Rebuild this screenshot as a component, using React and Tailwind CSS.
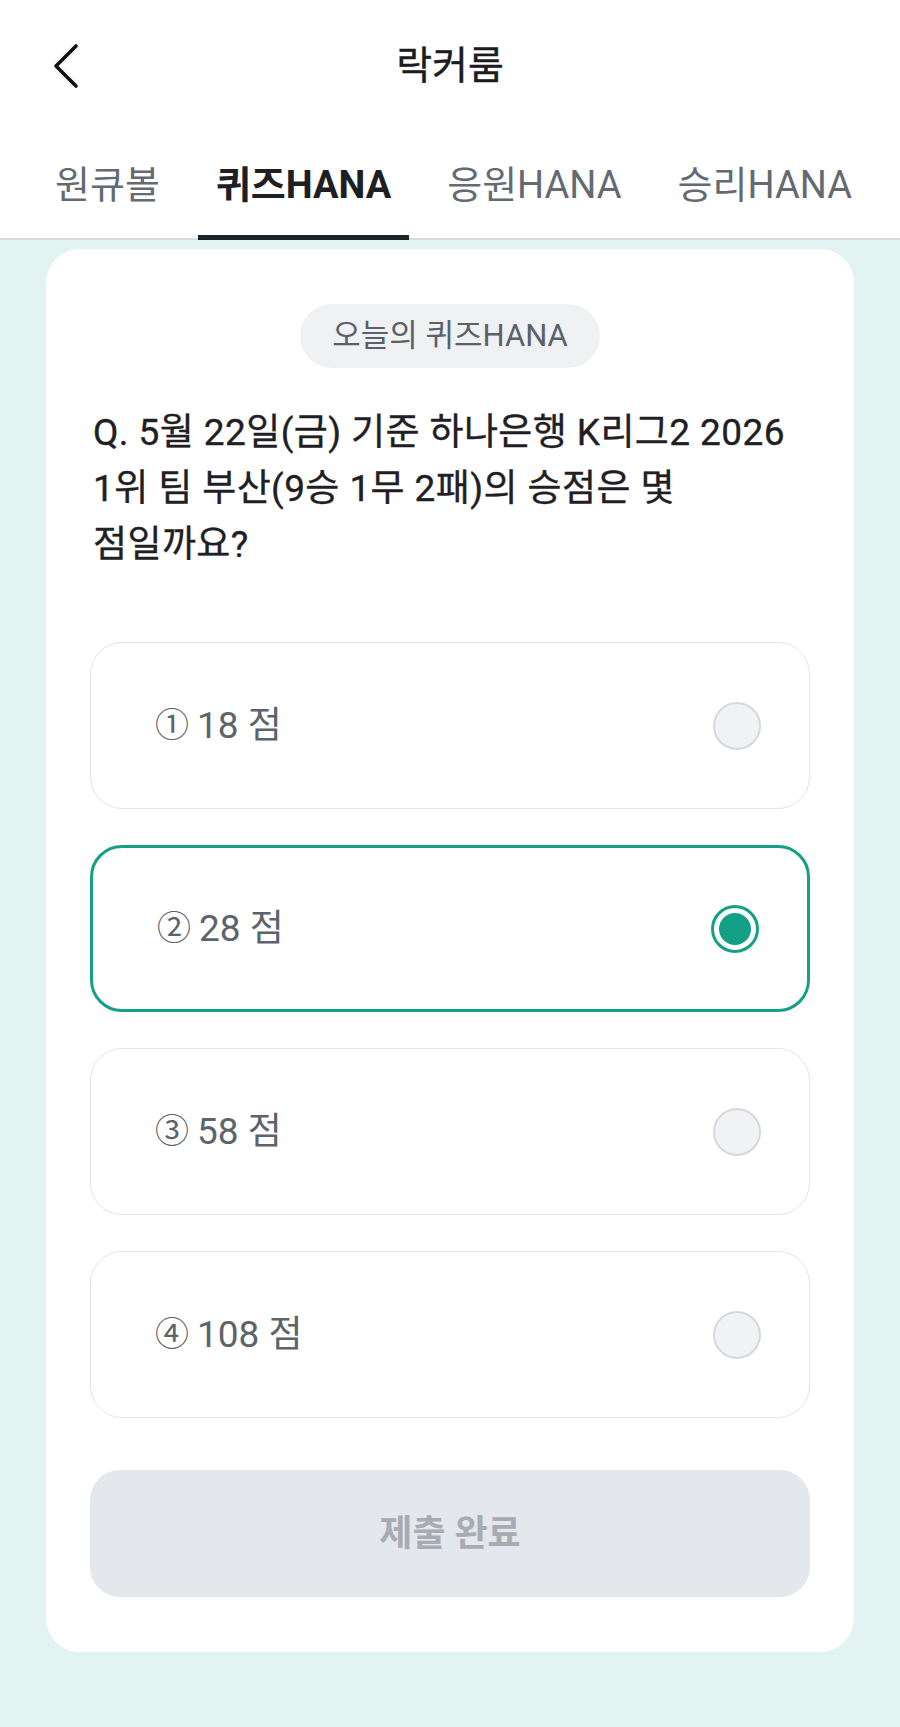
import React, { useState } from 'react';

const FONT = 'Roboto, "Noto Sans CJK KR", "Noto Sans", sans-serif';

const tabs = ['원큐볼', '퀴즈HANA', '응원HANA', '승리HANA'];

const options = [
  { mark: '①', label: '18 점' },
  { mark: '②', label: '28 점' },
  { mark: '③', label: '58 점' },
  { mark: '④', label: '108 점' },
];

const Radio = ({ checked }) =>
  checked ? (
    <span className="flex h-[48px] w-[48px] items-center justify-center rounded-full border-[3px] border-[#13a087] bg-white">
      <span className="h-[32px] w-[32px] rounded-full bg-[#13a087]" />
    </span>
  ) : (
    <span className="h-[48px] w-[48px] rounded-full border-2 border-[#d6d8dc] bg-[#f1f2f4]" />
  );

export default function App() {
  const [activeTab] = useState(1);
  const [selected, setSelected] = useState(1);

  return (
    <div className="min-h-screen bg-[#e3f3f2]" style={{ fontFamily: FONT }}>
      {/* header */}
      <header className="bg-white">
        <div className="grid h-[132px] grid-cols-[1fr_auto_1fr] items-center">
          <div className="pl-[52px]">
            <button className="flex items-center">
              <svg width="28" height="46" viewBox="0 0 28 46" fill="none">
                <path d="M24 3 L4 23 L24 43" stroke="#111" strokeWidth="3.6" strokeLinecap="round" strokeLinejoin="round" />
              </svg>
            </button>
          </div>
          <h1 className="text-[39px] font-normal text-[#1c1c1e] [-webkit-text-stroke:0.4px_#1c1c1e]">락커룸</h1>
          <div />
        </div>
        <nav className="flex h-[108px] gap-[20px] border-b-2 border-[#d9dcdf] pl-[37px]">
          {tabs.map((t, i) => (
            <div
              key={t}
              className={`relative flex items-center px-[18px] text-[38px] ${
                i === activeTab ? 'font-bold text-[#1d1f23]' : 'text-[#646a71]'
              }`}
            >
              {t}
              {i === activeTab && (
                <span className="absolute bottom-[-2px] left-0 right-0 h-[5px] bg-[#1e2229]" />
              )}
            </div>
          ))}
        </nav>
      </header>

      {/* quiz card */}
      <div className="mx-[46px] mt-[9px] rounded-[34px] bg-white px-[44px] pb-[55px] pt-[55px]">
        <div className="flex justify-center">
          <span className="flex h-[64px] w-[300px] items-center justify-center rounded-full bg-[#f0f1f3] text-[31px] text-[#5b6168]">
            오늘의 퀴즈HANA
          </span>
        </div>

        <p className="mt-[37px] pl-[3px] text-[37px] font-normal leading-[56px] tracking-[0.4px] text-[#1f2023] [-webkit-text-stroke:0.35px_#1f2023]">
          Q. 5월 22일(금) 기준 하나은행 K리그2 2026
          <br />
          1위 팀 부산(9승 1무 2패)의 승점은 몇
          <br />
          점일까요?
        </p>

        <div className="mt-[69px] flex flex-col gap-[36px]">
          {options.map((o, i) => (
            <button
              key={o.label}
              onClick={() => setSelected(i)}
              className={`flex h-[167px] items-center justify-between rounded-[32px] bg-white pl-[64px] pr-[48px] text-[37px] text-[#5d636a] ${
                selected === i ? 'border-[3px] border-[#13a087]' : 'border border-[#e3e5e8]'
              }`}
            >
              <span className="flex items-center gap-[8px]">
                <span className="text-[34px]">{o.mark}</span>
                <span>{o.label}</span>
              </span>
              <Radio checked={selected === i} />
            </button>
          ))}
        </div>

        <button className="mt-[52px] flex h-[127px] w-full items-center justify-center rounded-[30px] bg-[#e4e7eb] text-[36px] font-semibold text-[#a8acb2]">
          제출 완료
        </button>
      </div>

      <div className="h-[78px]" />
    </div>
  );
}
